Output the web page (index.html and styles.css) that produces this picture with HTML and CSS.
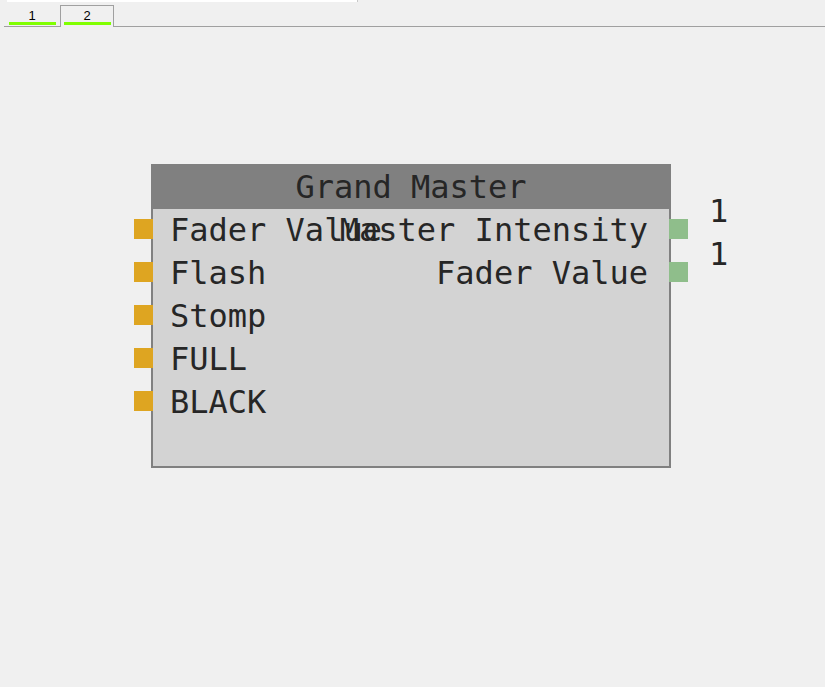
FILE: index.html
```
<!DOCTYPE html>
<html>
<head>
<meta charset="utf-8">
<link rel="stylesheet" href="styles.css">
</head>
<body>
<div class="topstrip"></div>
<div class="tabbar">
  <div class="tab"><span class="tab-label">1</span><span class="tab-line"></span></div>
  <div class="tab tab-active"><span class="tab-label">2</span><span class="tab-line"></span></div>
  <div class="tab-fill"></div>
</div>
<div class="canvas">
  <div class="node">
    <div class="node-header">Grand Master</div>
    <div class="node-rows">
      <div class="row">
        <span class="port port-in"></span>
        <span class="lbl lbl-in">Fader Value</span>
        <span class="lbl lbl-out">Master Intensity</span>
        <span class="port port-out"></span>
        <span class="val">1</span>
      </div>
      <div class="row">
        <span class="port port-in"></span>
        <span class="lbl lbl-in">Flash</span>
        <span class="lbl lbl-out">Fader Value</span>
        <span class="port port-out"></span>
        <span class="val">1</span>
      </div>
      <div class="row">
        <span class="port port-in"></span>
        <span class="lbl lbl-in">Stomp</span>
      </div>
      <div class="row">
        <span class="port port-in"></span>
        <span class="lbl lbl-in">FULL</span>
      </div>
      <div class="row">
        <span class="port port-in"></span>
        <span class="lbl lbl-in">BLACK</span>
      </div>
    </div>
  </div>
</div>
</body>
</html>
```
FILE: styles.css
```
html, body {
  margin: 0;
  padding: 0;
  background: #f0f0f0;
  width: 825px;
  height: 687px;
  overflow: hidden;
}
body {
  font-family: "DejaVu Sans Mono", monospace;
  color: #262626;
}
.topstrip {
  margin-left: 7px;
  width: 350px;
  height: 2px;
  background: #ffffff;
  border-right: 1px solid #c8c8c8;
}
.tabbar {
  display: flex;
  margin-top: 3px;
  height: 22px;
  padding-left: 4px;
  font-family: "Liberation Sans", Arial, sans-serif;
  font-size: 13px;
  color: #000;
}
.tab {
  width: 56px;
  box-sizing: border-box;
  border-bottom: 1px solid #a0a0a0;
  display: flex;
  flex-direction: column;
  align-items: center;
  padding-top: 4px;
}
.tab-active {
  width: 54px;
  border: 1px solid #a0a0a0;
  border-bottom: none;
  padding-top: 3px;
}
.tab-label {
  line-height: 13px;
  height: 13px;
}
.tab-line {
  display: block;
  width: 47px;
  height: 3px;
  background: #80ff00;
}
.tab-fill {
  flex: 1;
  border-bottom: 1px solid #a0a0a0;
}
.canvas {
  position: relative;
  height: 660px;
}
.node {
  position: absolute;
  left: 151px;
  top: 137px;
  width: 520px;
  height: 304px;
  box-sizing: border-box;
  border: 2px solid #808080;
  background: #d3d3d3;
  font-size: 32px;
}
.node-header {
  margin: -2px -2px 0;
  height: 45px;
  line-height: 46px;
  background: #808080;
  text-align: center;
  white-space: nowrap;
}
.node-rows {
  display: grid;
  grid-auto-rows: 43px;
}
.row {
  position: relative;
  display: grid;
  padding: 0 21px 0 17px;
  line-height: 43px;
  white-space: nowrap;
}
.lbl {
  grid-area: 1 / 1;
}
.lbl-in {
  justify-self: start;
}
.lbl-out {
  justify-self: end;
}
.port {
  position: absolute;
  top: 10px;
  width: 19px;
  height: 20px;
}
.port-in {
  left: -19px;
  background: #dea521;
}
.port-out {
  right: -19px;
  background: #8fbe8b;
}
.val {
  position: absolute;
  left: calc(100% + 40px);
  top: -19px;
}
```
